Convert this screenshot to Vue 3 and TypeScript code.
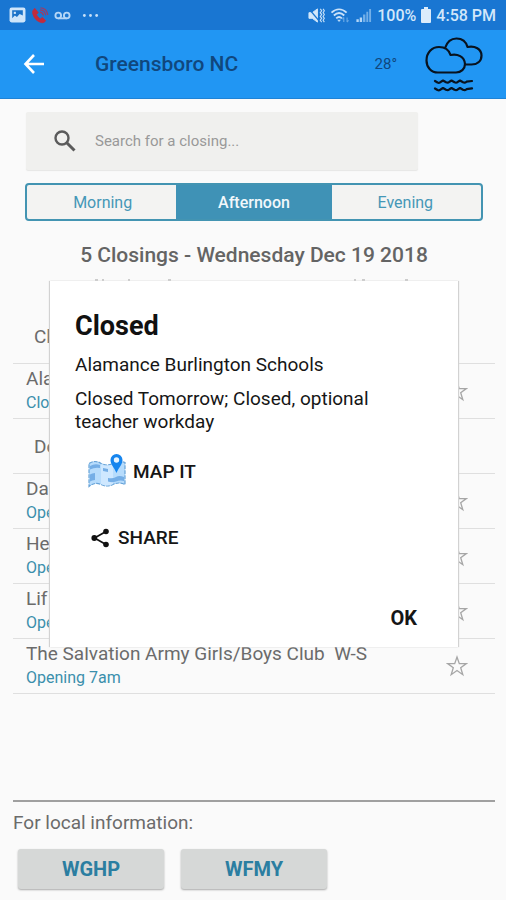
<script setup lang="ts">
import { ref } from 'vue'

interface Entry {
  kind: 'section' | 'item'
  name: string
  status?: string
}

const city = 'Greensboro NC'
const temperature = '28°'
const query = ref('')
const periods = ['Morning', 'Afternoon', 'Evening']
const active = ref('Afternoon')
const dialogOpen = ref(true)
const stations = ['WGHP', 'WFMY']

const entries: Entry[] = [
  { kind: 'section', name: 'Cl' },
  { kind: 'item', name: 'Ala', status: 'Clo' },
  { kind: 'section', name: 'De' },
  { kind: 'item', name: 'Da', status: 'Ope' },
  { kind: 'item', name: 'He', status: 'Ope' },
  { kind: 'item', name: 'Lif', status: 'Ope' },
  { kind: 'item', name: 'The Salvation Army Girls/Boys Club\u00a0 W-S', status: 'Opening 7am' },
]
</script>

<template>
  <div class="page">
    <div class="status">
      <div class="status-group">
        <svg class="ico" viewBox="0 0 16 16" aria-hidden="true">
          <rect x="0.5" y="0.5" width="15" height="14" rx="2" fill="#cfe5fa" />
          <path d="M3 3h10v5l-3-1.500-2.500 3-2-1.500L3 10.500z" fill="#1b72c8" />
          <path d="M4.500 4.500h2v2h-2z" fill="#cfe5fa" />
        </svg>
        <svg class="ico call" viewBox="0 0 18 18" aria-hidden="true">
          <path d="M3.500 1.500C1.500 3 .8 5 1.500 7.500c1.200 4.500 4.500 8 9 9 2 .4 3.500-.5 4.500-2l-3.500-3.300-2.200 1.500C7.500 11.500 6 10 5.200 8l1.900-2z" fill="#c22a3e" stroke="#c22a3e" />
          <path d="M9 5.500c2 .3 3.300 1.500 3.600 3.500M9 3c3.300.2 5.700 2.500 6 5.800M9.500.8c4.500.5 7.300 3.400 7.700 7.700" fill="none" stroke="#a03a62" stroke-width="1.300" />
        </svg>
        <svg class="ico" viewBox="0 0 18 18" aria-hidden="true">
          <g fill="none" stroke="#b4d6f7" stroke-width="2">
            <circle cx="4.500" cy="9" r="3" />
            <circle cx="13.500" cy="9" r="3" />
            <path d="M4.500 12h9" />
          </g>
        </svg>
        <svg class="ico dots" viewBox="0 0 18 18" aria-hidden="true">
          <g fill="#c4dff8">
            <circle cx="2.500" cy="9" r="1.500" /><circle cx="9" cy="9" r="1.500" /><circle cx="15.500" cy="9" r="1.500" />
          </g>
        </svg>
      </div>
      <div class="status-group right">
        <svg class="ico" viewBox="0 0 18 18" aria-hidden="true">
          <path d="M1 6h3.500L10 2v14l-5.500-4H1z" fill="#d3e7fa" stroke="#d3e7fa" />
          <path d="M1 2l11 13" stroke="#1976d2" stroke-width="1.500" />
          <path d="M13 2l1.500 2L13 6l1.500 2-1.500 2 1.500 2-1.500 2 1.500 2M16 2l1.300 2L16 6l1.300 2-1.300 2 1.300 2-1.300 2 1.300 2" fill="none" stroke="#c4dff8" stroke-width="1.200" />
        </svg>
        <svg class="ico wifi" viewBox="0 0 20 18" aria-hidden="true">
          <path d="M1 6c5-4.700 11-4.700 16 0M3.500 9c3.500-3.300 7.500-3.300 11 0M6 12c2-1.800 4-1.800 6 0" fill="none" stroke="#cbe2f9" stroke-width="2" />
          <path d="M9 16l-2-2.500h4z" fill="#bbdaf7" />
          <path d="M14 16v-5m0 0l-1.500 2M17.500 11v5m0 0l1.500-2" fill="none" stroke="#68a8e5" stroke-width="1.200" />
        </svg>
        <svg class="ico" viewBox="0 0 18 18" aria-hidden="true">
          <path d="M1.500 16v-3h2.500v3zM5 16v-5h2.500v5z" fill="#b4d6f7" />
          <path d="M8.500 16V8H11v8zM12 16V5h2v11zM15 16V2h2v14z" fill="#73afe8" />
        </svg>
        <span>100%</span>
        <svg class="battery" viewBox="0 0 10 16" aria-hidden="true">
          <path d="M3 0h4v2h2q1 0 1 1v12q0 1-1 1H1q-1 0-1-1V3q0-1 1-1h2z" fill="#dcecfb" />
        </svg>
        <span>4:58 PM</span>
      </div>
    </div>

    <header class="appbar">
      <button class="back" type="button" aria-label="Back">
        <svg viewBox="0 0 20 20" aria-hidden="true">
          <path d="M10 1L1.500 10l8.500 9M1.500 10H20" fill="none" stroke="#fff" stroke-width="2.600" />
        </svg>
      </button>
      <h1 class="city">{{ city }}</h1>
      <span class="temp">{{ temperature }}</span>
      <svg class="weather" viewBox="0 0 58 56" aria-hidden="true">
        <g fill="none" stroke="#08131f" stroke-width="2.200" stroke-linecap="round" stroke-linejoin="round">
          <path d="M13 36.500C6 36.500 1.500 31 1.500 24.500C1.500 16.500 7 11 14 11c6 0 10 3 11.500 8 7-1.500 14 1.500 14.500 9 0 5-4 8.500-9 8.500z" />
          <path d="M20 12C22 6 26 2.500 31.500 2.500c5.500 0 9.500 3 11 8.500C50 9.500 56.500 13 56.500 19.500c0 6-4.500 9-10 9h-6" />
          <path d="M10 45l2.500 1.500q2 .8 3.500-.8l2-1.200 3 1.800q2 .8 3.500-.6l2-1.200 3 1.800q2 .8 3.500-.6l2-1.200 3 1.800q2 .8 3.500-.6L47 45M10 52.500l2.500 1.500q2 .8 3.500-.8l2-1.200 3 1.800q2 .8 3.500-.6l2-1.200 3 1.800q2 .8 3.500-.6l2-1.200 3 1.800q2 .8 3.500-.6l5.500-.9" />
        </g>
      </svg>
    </header>

    <main class="content">
      <label class="search">
        <svg viewBox="0 0 22 22" aria-hidden="true">
          <circle cx="8" cy="8" r="6.500" fill="none" stroke="#5b5b5b" stroke-width="2.400" />
          <path d="M13 13l7.500 7.500" stroke="#5b5b5b" stroke-width="3" />
        </svg>
        <input v-model="query" type="text" placeholder="Search for a closing..." aria-label="Search for a closing" />
      </label>

      <div class="tabs">
        <button
          v-for="period in periods"
          :key="period"
          type="button"
          class="tab"
          :class="{ active: period === active }"
          :aria-pressed="period === active"
          @click="active = period"
        >{{ period }}</button>
      </div>

      <h2 class="summary">5 Closings - Wednesday Dec 19 2018</h2>

      <div class="list-area">
        <!-- Tops of the column captions that show above the dialog's edge -->
        <svg class="captions" viewBox="0 0 320 2" aria-hidden="true">
          <path d="M1 1h3M8 1h2M34 1h2M74 1h3M260 1h2M268 1h3M311 1h3" stroke="#bdbdbd" stroke-width="1.500" />
        </svg>
        <ul class="list">
          <li v-for="(entry, i) in entries" :key="i" :class="entry.kind">
            <template v-if="entry.kind === 'section'">{{ entry.name }}</template>
            <template v-else>
              <div class="texts">
                <span class="name">{{ entry.name }}</span>
                <span class="state">{{ entry.status }}</span>
              </div>
              <button class="star" type="button" aria-label="Favorite">
                <svg viewBox="0 0 22 22" aria-hidden="true">
                  <path d="M11 2l2.300 6.600h7l-5.600 4.200 2.100 6.900-5.800-4.200-5.800 4.200 2.100-6.900L1.700 8.600h7z" fill="none" stroke="#a6a6a6" stroke-width="1.300" />
                </svg>
              </button>
            </template>
          </li>
        </ul>

        <div v-if="dialogOpen" class="dialog" role="dialog" aria-labelledby="dialog-title">
          <h3 id="dialog-title">Closed</h3>
          <p class="org">Alamance Burlington Schools</p>
          <p class="detail">Closed Tomorrow; Closed, optional teacher workday</p>
          <button class="action map" type="button">
            <svg class="map-icon" viewBox="0 0 38 36" aria-hidden="true">
              <path d="M1 10.500q6-4 12 0 6 3 12 0 6-3 12-1v22q-6-3-12 0-6 3-12 0-6-3-12 2z" fill="#b7dcfc" stroke="#67a3d8" stroke-width="1.200" stroke-dasharray="4 1" />
              <path d="M13 11q6 3 12 0v20q-6 3-12 0z" fill="#cfe8ff" />
              <path d="M2 13q5-3 10-1v3q-5-1-10 1.500zM2 21.500q2-1.500 5-1.500v7q-3 0-5 1.500zM20 25q5 1 8-1t8 0v4q-4-1-8 .5t-8 0zM15 15l5 1v3l-5-1z" fill="#75aee6" />
              <path d="M28.500 20C26 14 22.500 11.500 22.500 7a6 6 0 0 1 12 0c0 4.500-3.500 7-6 13z" fill="#1685ee" />
              <circle cx="28.500" cy="7" r="2.700" fill="#e8f5ff" />
            </svg>
            MAP IT
          </button>
          <button class="action share" type="button">
            <svg class="share-icon" viewBox="0 0 18 20" aria-hidden="true">
              <path d="M15 3.500L3.500 10 15 16.500" fill="none" stroke="#111" stroke-width="1.700" />
              <circle cx="15" cy="3.500" r="2.800" fill="#111" />
              <circle cx="3.300" cy="10" r="2.900" fill="#111" />
              <circle cx="15" cy="16.500" r="2.800" fill="#111" />
            </svg>
            SHARE
          </button>
          <button class="ok" type="button" @click="dialogOpen = false">OK</button>
        </div>
      </div>
    </main>

    <footer class="footer">
      <p>For local information:</p>
      <div class="stations">
        <button v-for="station in stations" :key="station" type="button">{{ station }}</button>
      </div>
    </footer>
  </div>
</template>

<style>
body {
  margin: 0;
  background: #fafafa;
}
</style>

<style scoped>
.page {
  display: flex;
  flex-direction: column;
  min-height: 100vh;
  font-family: Roboto, "Liberation Sans", sans-serif;
  color: #6b6b6b;
  background: #fafafa;
}
button {
  padding: 0;
  border: 0;
  background: none;
  font: inherit;
  color: inherit;
  cursor: pointer;
}
h1, h2, h3, p, ul {
  margin: 0;
  padding: 0;
}
svg {
  display: block;
  flex: none;
}
.status {
  display: flex;
  justify-content: space-between;
  align-items: center;
  height: 30px;
  padding: 0 10px 0 9px;
  background: #1976d2;
  color: #d3e7fa;
  font-size: 16px;
  font-weight: 500;
}
.status-group {
  display: flex;
  align-items: center;
  gap: 5px;
}
.ico {
  width: 17px;
  height: 17px;
}
.call {
  width: 18px;
}
.dots {
  margin-left: 6px;
}
.wifi {
  width: 20px;
}
.battery {
  width: 10px;
  height: 16px;
}
.appbar {
  display: flex;
  align-items: center;
  height: 69px;
  padding: 0 23px;
  background: #2196f3;
  border-bottom: 1px solid #1f83d6;
  box-sizing: border-box;
  color: #10477d;
}
.back svg {
  width: 22px;
  height: 20px;
}
.city {
  flex: 1;
  margin-left: 50px;
  font-size: 21px;
  font-weight: 500;
}
.temp {
  margin-right: 28px;
  font-size: 15px;
}
.weather {
  width: 58px;
  height: 56px;
}
.content {
  padding: 13px 11px 0 13px;
}
.search {
  display: flex;
  align-items: center;
  height: 58px;
  margin: 0 77px 0 13px;
  padding-left: 28px;
  gap: 19px;
  border-radius: 2px;
  background: #f0f0ee;
  box-shadow: 0 1px 1px #e6e6e5;
}
.search svg {
  width: 22px;
  height: 22px;
}
.search input {
  flex: 1;
  min-width: 0;
  padding: 0;
  border: 0;
  outline: 0;
  background: none;
  font: inherit;
  font-size: 15px;
  color: #555;
}
.search input::placeholder {
  color: #999;
  opacity: 1;
}
.tabs {
  display: grid;
  grid-template-columns: repeat(3, 1fr);
  height: 38px;
  margin: 13px 12px 0 12px;
  box-sizing: border-box;
  border: 2px solid #4394b2;
  border-radius: 4px;
  background: #f3f3f2;
}
.tab {
  font-size: 16px;
  color: #4597b7;
}
.tab.active {
  margin: 0 -2px;
  background: #3f92b6;
  color: #f2f8fb;
  font-weight: 500;
}
.summary {
  margin-top: 22px;
  font-size: 21px;
  line-height: 24px;
  font-weight: 500;
  text-align: center;
  color: #646464;
}
.list-area {
  position: relative;
  padding-top: 12px;
}
.captions {
  width: 320px;
  height: 2px;
  margin: 0 auto 28px;
}
.list {
  list-style: none;
}
.list li {
  display: flex;
  height: 55px;
  box-sizing: border-box;
  border-bottom: 1px solid #dfdfdf;
}
.list .section {
  align-items: center;
  padding-left: 21px;
  font-size: 19px;
}
.list .item {
  align-items: center;
  justify-content: space-between;
  padding: 0 27px 0 13px;
}
.texts {
  display: flex;
  flex-direction: column;
}
.name {
  font-size: 19px;
  line-height: 24px;
}
.state {
  font-size: 16px;
  line-height: 24px;
  color: #3a8fac;
}
.star svg {
  width: 22px;
  height: 22px;
}
.dialog {
  position: absolute;
  top: 14px;
  left: 37px;
  right: 37px;
  height: 366px;
  display: flex;
  flex-direction: column;
  align-items: flex-start;
  box-sizing: border-box;
  padding: 28px 41px 16px 25px;
  background: #fff;
  box-shadow: -1px 0 1px #d2d2d2, 1px 0 1px #d2d2d2;
  color: #161616;
  font-size: 19px;
  line-height: 23px;
}
.dialog h3 {
  font-size: 27px;
  line-height: 34px;
  font-weight: 700;
  color: #111;
}
.org {
  margin-top: 10px;
}
.detail {
  margin-top: 11px;
}
.action {
  display: flex;
  align-items: center;
  font-weight: 500;
}
.map {
  margin: 20px 0 0 13px;
  gap: 7px;
}
.share {
  margin: 37px 0 0 16px;
  gap: 9px;
}
.map-icon {
  width: 38px;
  height: 36px;
}
.share-icon {
  width: 18px;
  height: 20px;
}
.ok {
  align-self: flex-end;
  margin-top: auto;
  font-size: 20px;
  line-height: 26px;
  font-weight: 700;
}
.footer {
  margin: auto 11px 0 13px;
  padding: 9px 0 11px;
  border-top: 2px solid #a0a0a0;
  font-size: 19px;
  line-height: 24px;
}
.stations {
  display: flex;
  gap: 17px;
  margin: 14px 0 0 5px;
}
.stations button {
  width: 146px;
  height: 40px;
  border-radius: 3px;
  background: #d6d8d7;
  box-shadow: 0 1px 2px #a8a8a8;
  font-size: 20px;
  font-weight: 700;
  color: #2b7ea1;
}
</style>
